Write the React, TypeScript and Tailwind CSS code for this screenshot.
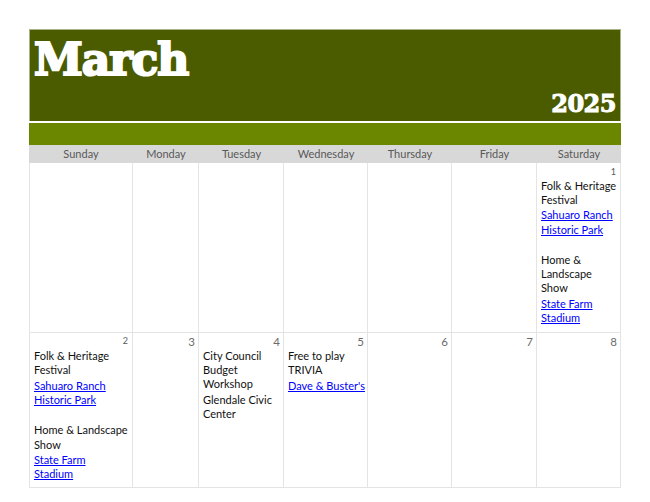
const columns = ["Sunday", "Monday", "Tuesday", "Wednesday", "Thursday", "Friday", "Saturday"];

const gridCols = "grid grid-cols-[104px_66px_85px_84px_84px_85px_84px]";

type Entry = { lines: string[]; place?: string[]; link?: boolean };

const festival: Entry[] = [
  { lines: ["Folk & Heritage", "Festival"], place: ["Sahuaro Ranch", "Historic Park"], link: true },
  { lines: ["Home & Landscape", "Show"], place: ["State Farm", "Stadium"], link: true },
];

const festivalNarrow: Entry[] = [
  festival[0],
  { lines: ["Home &", "Landscape", "Show"], place: ["State Farm", "Stadium"], link: true },
];

function Event({ entry }: { entry: Entry }) {
  return (
    <div className="mb-[16px] last:mb-0">
      <p className="text-[#111111]">
        {entry.lines.map((l) => (
          <span key={l} className="block whitespace-nowrap">{l}</span>
        ))}
      </p>
      {entry.place ? (
        <p className={entry.link ? "mt-[1.5px] text-[#0000ff] underline" : "mt-[1.5px] text-[#111111]"}>
          {entry.place.map((l) => (
            <span key={l} className="block whitespace-nowrap">{l}</span>
          ))}
        </p>
      ) : null}
    </div>
  );
}

function Cell({ day, small, tight, events }: { day?: number; small?: boolean; tight?: boolean; events?: Entry[] }) {
  let dayClass = "h-[15px] text-right text-[11.5px] leading-[15px] text-[#6b6b6b]";
  if (small) dayClass = "h-[15px] pr-[1px] text-right text-[9px] leading-[13px] text-[#595959]";
  if (small && tight) dayClass = "h-[13.5px] pr-[1px] text-right text-[9px] leading-[13px] text-[#595959]";
  return (
    <div className={tight ? "border-r border-[#e4e4e4] first:border-l pl-[4px] pr-[3px] pt-[2px] text-[11px] leading-[14.2px]" : "border-r border-[#e4e4e4] first:border-l pl-[4px] pr-[3px] pt-[1px] text-[11px] leading-[14.2px]"}>
      {day ? <div className={dayClass}>{day}</div> : null}
      {events?.map((e, i) => <Event key={i} entry={e} />)}
    </div>
  );
}

export default function App() {
  return (
    <div className="min-h-[502px] bg-white pt-[29px] pl-[29px] font-['Lato','Noto_Sans',sans-serif]">
      <div className="w-[592px]">
        <div className="flex h-[92px] flex-col justify-between border-t border-l border-r border-[#a9b38a] bg-[#4b5b00] text-white font-['DejaVu_Serif','Liberation_Serif',serif] font-bold">
          <div className="pl-[4px] pt-[2px] text-[44px] leading-[56px] tracking-[-1px] [-webkit-text-stroke:2.2px_white]">March</div>
          <div className="pr-[4px] pb-[3px] text-right text-[24px] leading-[28px] tracking-[-0.5px] [-webkit-text-stroke:1px_white]">2025</div>
        </div>
        <div className="mt-[2px] h-[22px] bg-[#6b8700]"></div>
        <div className={`${gridCols} h-[18px] bg-[#d8d8d8]`}>
          {columns.map((c) => (
            <div key={c} className="text-center text-[11px] leading-[18px] text-[#595959]">{c}</div>
          ))}
        </div>
        <div className={`${gridCols} h-[170px] border-b border-[#e4e4e4]`}>
          <Cell />
          <Cell />
          <Cell />
          <Cell />
          <Cell />
          <Cell />
          <Cell day={1} small tight events={festivalNarrow} />
        </div>
        <div className={`${gridCols} h-[155px] border-b border-[#e4e4e4]`}>
          <Cell day={2} small events={festival} />
          <Cell day={3} />
          <Cell day={4} events={[{ lines: ["City Council", "Budget", "Workshop"], place: ["Glendale Civic", "Center"] }]} />
          <Cell day={5} events={[{ lines: ["Free to play", "TRIVIA"], place: ["Dave & Buster's"], link: true }]} />
          <Cell day={6} />
          <Cell day={7} />
          <Cell day={8} />
        </div>
      </div>
    </div>
  );
}
